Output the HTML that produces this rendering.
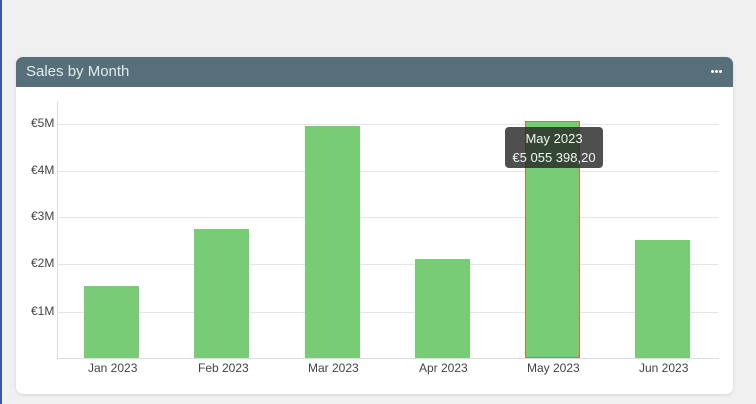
<!DOCTYPE html><html><head><style>
body{margin:0;width:756px;height:404px;background:#f0f0f0;position:relative;overflow:hidden;font-family:"Liberation Sans",sans-serif}
.lb{position:absolute;left:0;top:0;width:2px;height:404px;background:#3b5a9a}
.card{position:absolute;left:16px;top:57px;width:717px;height:337px;background:#fff;border-radius:7px;box-shadow:0 1px 3px rgba(0,0,0,.12);overflow:hidden}
.hd{height:30px;background:#566f7a;color:#e4eaec;font-size:15px;line-height:30px;padding-left:10px}
.dots{position:absolute;right:11px;top:13px;display:flex;gap:1px;line-height:0}
.dots i{display:block;width:3px;height:3px;border-radius:2px;background:#fff}
.a{position:absolute;font-size:12px;color:#444}
.g{position:absolute;left:57px;width:662px;height:1px;background:#e6e6e6}
.bar{position:absolute;width:55px;background:#77cc75}
.tt{position:absolute;left:505px;top:127px;width:98px;height:41px;background:rgba(40,40,40,.82);border-radius:4px;color:#f0f7f0;font-size:13px;text-align:center;line-height:19px;padding-top:2px;box-sizing:border-box}
</style></head><body>
<div class="lb"></div>
<div class="card"><div class="hd">Sales by Month</div><div class="dots"><i></i><i></i><i></i></div></div>
<div class="g" style="top:124px"></div><div class="g" style="top:171px"></div><div class="g" style="top:217px"></div><div class="g" style="top:264px"></div><div class="g" style="top:312px"></div>
<div class="g" style="top:358px;background:#ddd"></div>
<div style="position:absolute;left:57px;top:102px;width:1px;height:257px;background:#ddd"></div>
<div class="a" style="left:31px;top:116px">€5M</div>
<div class="a" style="left:31px;top:163px">€4M</div>
<div class="a" style="left:31px;top:209px">€3M</div>
<div class="a" style="left:31px;top:256px">€2M</div>
<div class="a" style="left:31px;top:304px">€1M</div>
<div class="bar" style="left:84px;top:286px;height:72px"></div>
<div class="bar" style="left:194px;top:229px;height:129px"></div>
<div class="bar" style="left:305px;top:126px;height:232px"></div>
<div class="bar" style="left:415px;top:259px;height:99px"></div>
<div class="bar" style="left:525px;top:121px;height:237px;border:1px solid #d0703e;box-sizing:border-box"></div>
<div class="bar" style="left:635px;top:240px;height:118px"></div>
<div class="a" style="left:88px;top:361px">Jan 2023</div>
<div class="a" style="left:198px;top:361px">Feb 2023</div>
<div class="a" style="left:308px;top:361px">Mar 2023</div>
<div class="a" style="left:419px;top:361px">Apr 2023</div>
<div class="a" style="left:527px;top:361px">May 2023</div>
<div class="a" style="left:639px;top:361px">Jun 2023</div>
<div class="tt">May 2023<br>€5 055 398,20</div>
</body></html>
